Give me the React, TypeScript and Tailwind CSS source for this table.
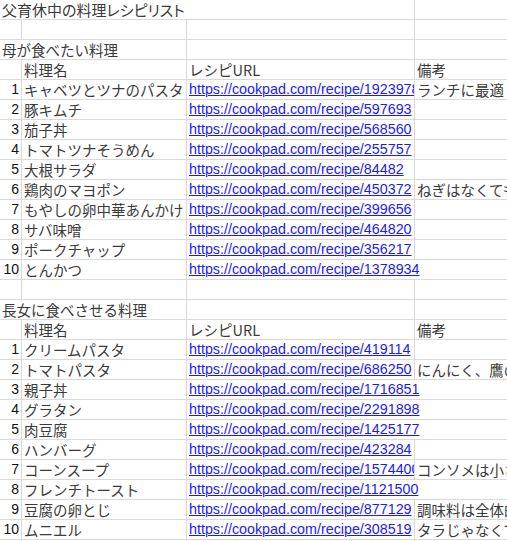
import React from "react";

const JP = "font-['Noto_Sans_CJK_JP',sans-serif] text-[14.5px] text-[#3a3a3a]";
const LAT = "font-['Liberation_Sans',Arial,sans-serif]";

type Item = { n: number; name: string; id: string; note?: string };

const t1: Item[] = [
  { n: 1, name: "キャベツとツナのパスタ", id: "1923978", note: "ランチに最適" },
  { n: 2, name: "豚キムチ", id: "597693" },
  { n: 3, name: "茄子丼", id: "568560" },
  { n: 4, name: "トマトツナそうめん", id: "255757" },
  { n: 5, name: "大根サラダ", id: "84482" },
  { n: 6, name: "鶏肉のマヨポン", id: "450372", note: "ねぎはなくても大丈夫" },
  { n: 7, name: "もやしの卵中華あんかけ", id: "399656" },
  { n: 8, name: "サバ味噌", id: "464820" },
  { n: 9, name: "ポークチャップ", id: "356217" },
  { n: 10, name: "とんかつ", id: "1378934" },
];

const t2: Item[] = [
  { n: 1, name: "クリームパスタ", id: "419114" },
  { n: 2, name: "トマトパスタ", id: "686250", note: "にんにく、鷹の爪は省略" },
  { n: 3, name: "親子丼", id: "1716851" },
  { n: 4, name: "グラタン", id: "2291898" },
  { n: 5, name: "肉豆腐", id: "1425177" },
  { n: 6, name: "ハンバーグ", id: "423284" },
  { n: 7, name: "コーンスープ", id: "1574400", note: "コンソメは小さじ1" },
  { n: 8, name: "フレンチトースト", id: "1121500" },
  { n: 9, name: "豆腐の卵とじ", id: "877129", note: "調味料は全体的に少なめ" },
  { n: 10, name: "ムニエル", id: "308519", note: "タラじゃなくても可" },
];

const rowCls = "flex h-[20px] border-b border-[#dadada]";
const cellBase = "h-[19px] shrink-0 whitespace-nowrap";

function BlankRow() {
  return (
    <div className={rowCls}>
      <div className={`${cellBase} w-[22px] border-r border-[#dadada]`} />
      <div className={`${cellBase} w-[165px] border-r border-[#dadada]`} />
      <div className={`${cellBase} w-[228px] border-r border-[#dadada]`} />
      <div className={`${cellBase} flex-1`} />
    </div>
  );
}

function SectionRow({ text }: { text: string }) {
  return (
    <div className={rowCls}>
      <div className={`${cellBase} w-[187px] border-r border-[#dadada] pl-[2px] leading-[19px] ${JP}`}>{text}</div>
      <div className={`${cellBase} w-[228px] border-r border-[#dadada]`} />
      <div className={`${cellBase} flex-1`} />
    </div>
  );
}

function HeaderRow() {
  return (
    <div className={rowCls}>
      <div className={`${cellBase} w-[22px] border-r border-[#dadada]`} />
      <div className={`${cellBase} w-[165px] border-r border-[#dadada] pl-[2px] leading-[19px] ${JP}`}>料理名</div>
      <div className={`${cellBase} w-[228px] border-r border-[#dadada] pl-[2px] leading-[19px] ${JP}`}>レシピURL</div>
      <div className={`${cellBase} flex-1 pl-[2px] leading-[19px] ${JP}`}>備考</div>
    </div>
  );
}

function ItemRow({ it }: { it: Item }) {
  const long = it.id.length >= 7;
  const spill = long && !it.note;
  return (
    <div className={rowCls}>
      <div className={`${cellBase} w-[22px] border-r border-[#dadada] pr-[2px] text-right leading-[19px] text-[14px] text-[#111] ${LAT}`}>
        {it.n}
      </div>
      <div className={`${cellBase} w-[165px] border-r border-[#dadada] pl-[2px] leading-[19px] overflow-hidden ${JP}`}>{it.name}</div>
      <div
        className={`${cellBase} w-[228px] border-r pl-[2px] leading-[19px] text-[14.3px] ${LAT} ${
          spill ? "border-r-transparent overflow-visible relative z-10" : "border-[#dadada] overflow-hidden"
        }`}
      >
        <span className="text-[#1a1aff] underline decoration-[1px] underline-offset-[1px]">
          https://cookpad.com/recipe/{it.id}
        </span>
      </div>
      <div className={`${cellBase} flex-1 min-w-0 overflow-hidden pl-[2px] leading-[19px] ${JP}`}>{it.note ?? ""}</div>
    </div>
  );
}

export default function App() {
  return (
    <div className="w-[507px] h-[541px] overflow-hidden bg-white">
      <div className={rowCls}>
        <div
          className={`${cellBase} w-[415px] border-r border-[#dadada] pl-[2px] leading-[19px] font-['Noto_Sans_CJK_JP',sans-serif] text-[15px] text-[#3a3a3a] [font-feature-settings:'palt']`}
        >
          父育休中の料理レシピリスト
        </div>
        <div className={`${cellBase} flex-1`} />
      </div>
      <BlankRow />
      <SectionRow text="母が食べたい料理" />
      <HeaderRow />
      {t1.map((it) => (
        <ItemRow key={"a" + it.n} it={it} />
      ))}
      <BlankRow />
      <SectionRow text="長女に食べさせる料理" />
      <HeaderRow />
      {t2.map((it) => (
        <ItemRow key={"b" + it.n} it={it} />
      ))}
      <BlankRow />
    </div>
  );
}
